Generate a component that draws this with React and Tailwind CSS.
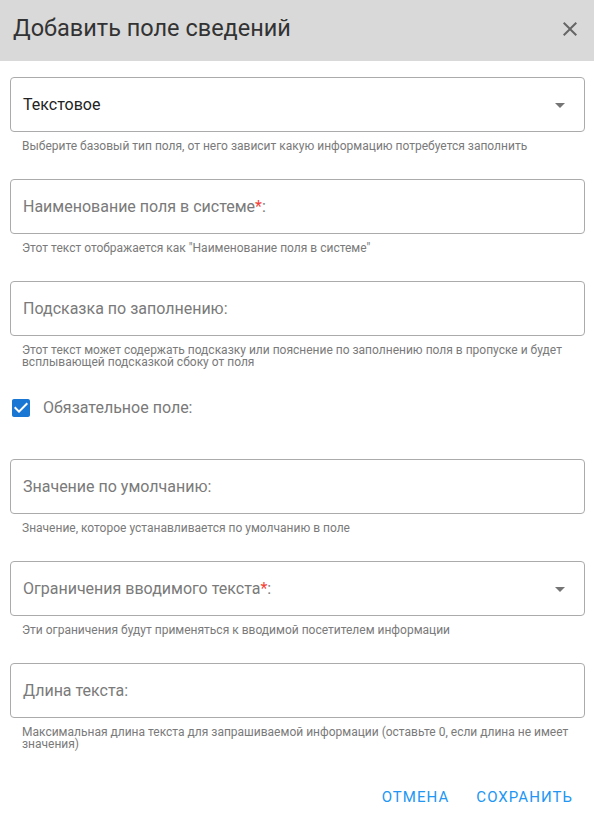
import React, { useState } from 'react';

const font = { fontFamily: 'Roboto, "Liberation Sans", Arial, sans-serif' };

const ArrowDown = () => (
    <svg width="24" height="24" viewBox="0 0 24 24" className="fill-[#757575]">
        <path d="M7 10l5 5 5-5z" />
    </svg>
);

const Field = ({ label, value, required, select, helper, className = '' }) => (
    <div className={className}>
        <div className="h-[55px] rounded-[4px] border border-[#ababab] flex items-center pl-[12px] pr-[12px] justify-between">
            {value ? (
                <span className="text-[16px] text-[#222]">{value}</span>
            ) : (
                <span className="text-[16px] text-[#7a7a7a]">
                    {label}
                    {required && <span className="text-[#f44336]">*</span>}:
                </span>
            )}
            {select && <ArrowDown />}
        </div>
        {helper && (
            <p className="mt-[8px] pl-[12px] text-[12px] leading-[12px] text-[#7a7a7a]">{helper}</p>
        )}
    </div>
);

const App = () => {
    const [required, setRequired] = useState(true);

    return (
        <div className="w-[594px] h-[821px] bg-white flex flex-col" style={font}>
            {/* Header */}
            <div className="h-[61px] bg-[#d9d9d9] flex items-center justify-between pl-[13px] pr-[12px]">
                <h1 className="text-[23.5px] text-[#333] font-normal -mt-[3px]">Добавить поле сведений</h1>
                <svg width="24" height="24" viewBox="0 0 24 24" className="fill-[#666] -mt-[3px]">
                    <path d="M19 6.41L17.59 5 12 10.59 6.41 5 5 6.41 10.59 12 5 17.59 6.41 19 12 13.41 17.59 19 19 17.59 13.41 12z" />
                </svg>
            </div>

            {/* Form */}
            <div className="flex flex-col pl-[10px] pr-[9px] pt-[16px]">
                <Field
                    value="Текстовое"
                    select
                    helper="Выберите базовый тип поля, от него зависит какую информацию потребуется заполнить"
                    className="mb-[27px]"
                />
                <Field
                    label="Наименование поля в системе"
                    required
                    helper={'Этот текст отображается как "Наименование поля в системе"'}
                    className="mb-[27px]"
                />
                <Field
                    label="Подсказка по заполнению"
                    helper="Этот текст может содержать подсказку или пояснение по заполнению поля в пропуске и будет всплывающей подсказкой сбоку от поля"
                    className="mb-[27px]"
                />

                <label className="h-[26px] flex items-center mb-[38px] cursor-pointer" onClick={() => setRequired(!required)}>
                    <svg width="24" height="24" viewBox="0 0 24 24" className="fill-[#1976d2] -ml-[1px]">
                        {required ? (
                            <path d="M19 3H5c-1.11 0-2 .9-2 2v14c0 1.1.89 2 2 2h14c1.11 0 2-.9 2-2V5c0-1.1-.89-2-2-2zm-9 14l-5-5 1.41-1.41L10 14.17l7.59-7.59L19 8l-9 9z" />
                        ) : (
                            <path d="M19 5v14H5V5h14m0-2H5c-1.1 0-2 .9-2 2v14c0 1.1.9 2 2 2h14c1.1 0 2-.9 2-2V5c0-1.1-.9-2-2-2z" />
                        )}
                    </svg>
                    <span className="ml-[10px] text-[16px] text-[#7a7a7a]">Обязательное поле:</span>
                </label>

                <Field
                    label="Значение по умолчанию"
                    helper="Значение, которое устанавливается по умолчанию в поле"
                    className="mb-[27px]"
                />
                <Field
                    label="Ограничения вводимого текста"
                    required
                    select
                    helper="Эти ограничения будут применяться к вводимой посетителем информации"
                    className="mb-[27px]"
                />
                <Field
                    label="Длина текста"
                    helper="Максимальная длина текста для запрашиваемой информации (оставьте 0, если длина не имеет значения)"
                />
            </div>

            {/* Actions */}
            <div className="flex justify-end items-center pr-[13px] mt-[30px] gap-[11px]">
                <button className="px-[8px] py-[6px] text-[15px] uppercase tracking-[0.07em] text-[#2196f3]">Отмена</button>
                <button className="px-[8px] py-[6px] text-[15px] uppercase tracking-[0.07em] text-[#2196f3]">Сохранить</button>
            </div>
        </div>
    );
};

export default App;
